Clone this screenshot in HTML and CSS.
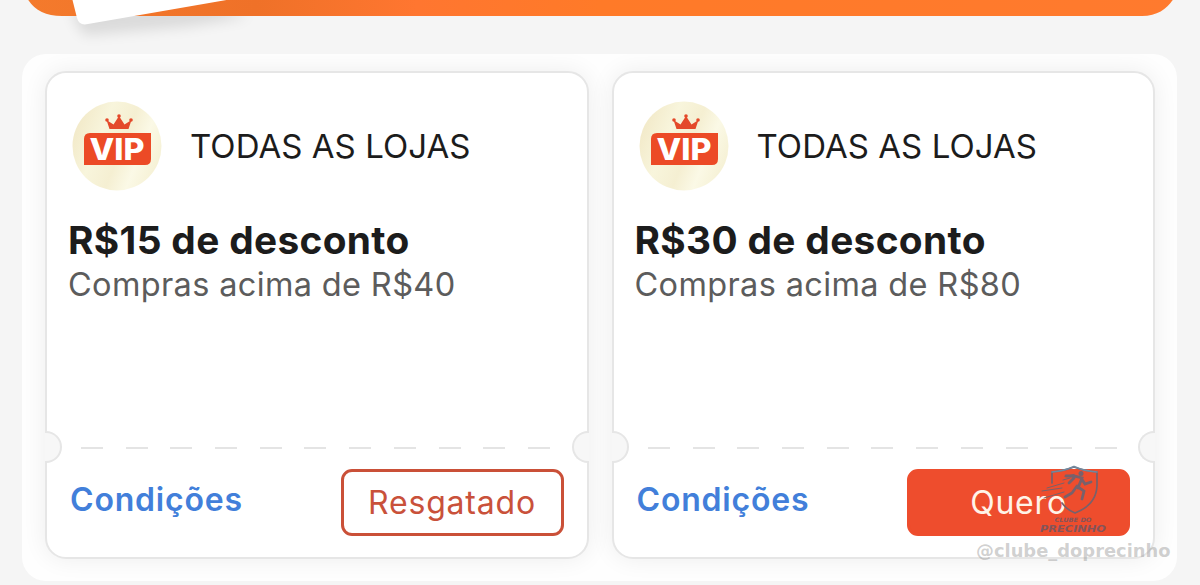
FILE: index.html
```
<!DOCTYPE html>
<html lang="pt-BR">
<head>
    <meta charset="UTF-8">
    <meta name="viewport" content="width=device-width, initial-scale=1.0">
    <title>Cupons</title>
    <link rel="stylesheet" href="styles.css">
</head>
<body>
    <!-- Bottom edge of the promo banner -->
    <header class="banner">
        <svg width="1200" height="54" viewBox="0 0 1200 54">
            <defs>
                <linearGradient id="orange" x1="0" x2="1" y1="0" y2="0">
                    <stop offset="0" stop-color="#f47a2c"/>
                    <stop offset="0.2" stop-color="#ef7128"/>
                    <stop offset="0.34" stop-color="#ff7630"/>
                    <stop offset="0.5" stop-color="#ff7a28"/>
                    <stop offset="1" stop-color="#ff7a2e"/>
                </linearGradient>
                <filter id="soft" x="-20%" y="-100%" width="140%" height="300%">
                    <feGaussianBlur stdDeviation="7"/>
                </filter>
            </defs>
            <path d="M70 10 L84 35 L190 26 L250 16 L210 4 Z" fill="#000" opacity="0.11" filter="url(#soft)"/>
            <path d="M27 -2 C34 10 45 16 62 16 H1142 C1158 16 1168 8 1174 -2 Z" fill="url(#orange)"/>
            <path d="M72 -2 L77 18 Q79 26 88 24 L238 -2 Z" fill="#fff"/>
        </svg>
    </header>

    <main class="panel">
        <section class="ticket">
            <div class="store">
                <svg class="vip" viewBox="0 0 90 90">
                    <defs>
                        <linearGradient id="gold" x1="0" y1="0.3" x2="1" y2="0.7">
                            <stop offset="0" stop-color="#f2e9c8"/>
                            <stop offset="0.3" stop-color="#f8f5dc"/>
                            <stop offset="0.55" stop-color="#f5efd2"/>
                            <stop offset="0.75" stop-color="#fbf9e6"/>
                            <stop offset="1" stop-color="#f5f0d3"/>
                        </linearGradient>
                    </defs>
                    <circle cx="45" cy="45" r="44.5" fill="url(#gold)"/>
                    <path d="M37.5 28 L34.5 19 L41.5 23.5 L47 15 L52.5 23.5 L59.5 19 L56.5 28 Z" fill="#e4492a"/>
                    <g fill="#e4492a"><circle cx="35" cy="19" r="1.8"/><circle cx="47" cy="15" r="1.8"/><circle cx="59" cy="19" r="1.8"/></g>
                    <path d="M18 32 H79 V58 Q79 64 73 64 H12 V38 Q12 32 18 32 Z" fill="#ec4a26"/>
                    <text x="45" y="59" class="vip-text" textLength="55" lengthAdjust="spacingAndGlyphs">VIP</text>
                </svg>
                <span class="store-name">TODAS AS LOJAS</span>
            </div>
            <h2 class="discount">R$15 de desconto</h2>
            <p class="minimum">Compras acima de R$40</p>
            <div class="tear"></div>
            <div class="actions">
                <a class="terms">Condições</a>
                <button class="btn btn-outline">Resgatado</button>
            </div>
        </section>

        <section class="ticket">
            <div class="store">
                <svg class="vip" viewBox="0 0 90 90">
                    <circle cx="45" cy="45" r="44.5" fill="url(#gold)"/>
                    <path d="M37.5 28 L34.5 19 L41.5 23.5 L47 15 L52.5 23.5 L59.5 19 L56.5 28 Z" fill="#e4492a"/>
                    <g fill="#e4492a"><circle cx="35" cy="19" r="1.8"/><circle cx="47" cy="15" r="1.8"/><circle cx="59" cy="19" r="1.8"/></g>
                    <path d="M18 32 H79 V58 Q79 64 73 64 H12 V38 Q12 32 18 32 Z" fill="#ec4a26"/>
                    <text x="45" y="59" class="vip-text" textLength="55" lengthAdjust="spacingAndGlyphs">VIP</text>
                </svg>
                <span class="store-name">TODAS AS LOJAS</span>
            </div>
            <h2 class="discount">R$30 de desconto</h2>
            <p class="minimum">Compras acima de R$80</p>
            <div class="tear"></div>
            <div class="actions">
                <a class="terms">Condições</a>
                <button class="btn btn-solid">Quero</button>
            </div>
        </section>
    </main>

    <!-- Watermark over the last ticket -->
    <svg class="mark" width="80" height="72" viewBox="0 0 80 72">
        <g fill="none" stroke="#78616b" stroke-width="1.7" stroke-linecap="round">
            <path d="M17 19 V8 Q29 7 39 3 Q49 7 62 8 V22 Q61 41 40 49 Q32 46 27 39"/>
            <path d="M17 8 Q29 7 39 2.5 Q49 7 62 8" stroke="#718aa0"/>
            <path d="M30 12.5 L39 10.5 M28 16 L35 14 M12 24 L29 19 M7 27 L27 24 M9 34 L29 28" stroke-width="1"/>
            <path d="M31 12 L39 12 L47 14 L43 24 M39 14 L34 19 M46 14 L50 20 L56 18" stroke-width="2.8"/>
            <path d="M43 23 L49 27 L47 35 M42 22 L37 29 L30 33" stroke-width="2.8"/>
        </g>
        <circle cx="46" cy="9.5" r="2.5" fill="#78616b"/>
        <text x="38" y="58" class="mark-small" textLength="37" lengthAdjust="spacingAndGlyphs">CLUBE DO</text>
        <text x="38" y="67.5" class="mark-big" textLength="66" lengthAdjust="spacingAndGlyphs">PRECINHO</text>
    </svg>
    <span class="handle">@clube_doprecinho</span>
</body>
</html>
```
FILE: styles.css
```
*, *::before, *::after {
    box-sizing: border-box;
}
body {
    position: relative;
    width: 1200px;
    height: 585px;
    margin: 0;
    overflow: hidden;
    background: #f5f5f5;
    font-family: Inter, "Liberation Sans", sans-serif;
}
.banner {
    height: 54px;
}
.banner svg {
    display: block;
}
.panel {
    display: flex;
    gap: 23px;
    width: 1155px;
    height: 527px;
    margin-left: 22px;
    padding: 17px 22px 22px 23px;
    border-radius: 24px;
    background: #fefefe;
    overflow: hidden;
}
.ticket {
    position: relative;
    display: flex;
    flex-direction: column;
    flex: 1;
    padding: 28px 23px 0 21px;
    border: 2px solid #e6e6e6;
    border-radius: 21px;
    background: #fff;
    box-shadow: 0 0 24px rgba(0, 0, 0, 0.07);
}
/* Side notches */
.ticket::before, .ticket::after {
    content: "";
    position: absolute;
    top: 358px;
    width: 17px;
    height: 32px;
    border: 2px solid #e6e6e6;
    background: #f7f7f7;
}
.ticket::before {
    left: -2px;
    border-left: none;
    border-radius: 0 16px 16px 0;
}
.ticket::after {
    right: -2px;
    border-right: none;
    border-radius: 16px 0 0 16px;
}
.store {
    display: flex;
    align-items: center;
    height: 90px;
    padding-left: 4px;
}
.vip {
    width: 90px;
    height: 90px;
}
.vip-text {
    font-family: Inter, sans-serif;
    font-size: 30px;
    font-weight: 800;
    text-anchor: middle;
    fill: #fff;
}
.store-name {
    margin-left: 28px;
    font-size: 33px;
    color: #1c1c1c;
    letter-spacing: 0.05px;
    white-space: nowrap;
}
.discount {
    margin: 26px 0 0;
    font-size: 38.8px;
    line-height: 46px;
    font-weight: 700;
    color: #1c1c1c;
    letter-spacing: 0.35px;
}
.minimum {
    margin: 0;
    font-size: 32.5px;
    line-height: 43px;
    color: #5c5c5c;
    letter-spacing: 0.35px;
}
.tear {
    width: 470px;
    height: 2px;
    margin: 141px 0 0 13px;
    background: repeating-linear-gradient(to right, #e4e4e4 0 22px, transparent 22px 44.7px);
}
.actions {
    display: flex;
    justify-content: space-between;
    align-items: center;
    margin-top: 20px;
    padding-left: 2px;
}
.terms {
    margin-top: -7px;
    font-size: 32px;
    font-weight: 600;
    color: #427fda;
    letter-spacing: 0.8px;
}
.btn {
    width: 223px;
    height: 67px;
    padding: 0;
    border: 3px solid #ca5038;
    border-radius: 11px;
    font-family: inherit;
    font-size: 32px;
    letter-spacing: 0.8px;
}
.btn-outline {
    background: #fff;
    color: #c9513a;
}
.btn-solid {
    border-color: #ee4d2d;
    background: #ee4d2d;
    color: #fff3e8;
}
.mark {
    position: absolute;
    left: 1035px;
    top: 464px;
}
.mark-small, .mark-big {
    font-family: "DejaVu Sans", sans-serif;
    font-weight: 700;
    font-style: italic;
    text-anchor: middle;
    fill: #84545a;
}
.mark-small {
    font-size: 6px;
}
.mark-big {
    font-size: 9.5px;
}
.handle {
    position: absolute;
    left: 976px;
    top: 541px;
    font-family: "DejaVu Sans", sans-serif;
    font-size: 17.9px;
    line-height: 20px;
    font-weight: 700;
    color: rgba(150, 150, 150, 0.45);
}
```
